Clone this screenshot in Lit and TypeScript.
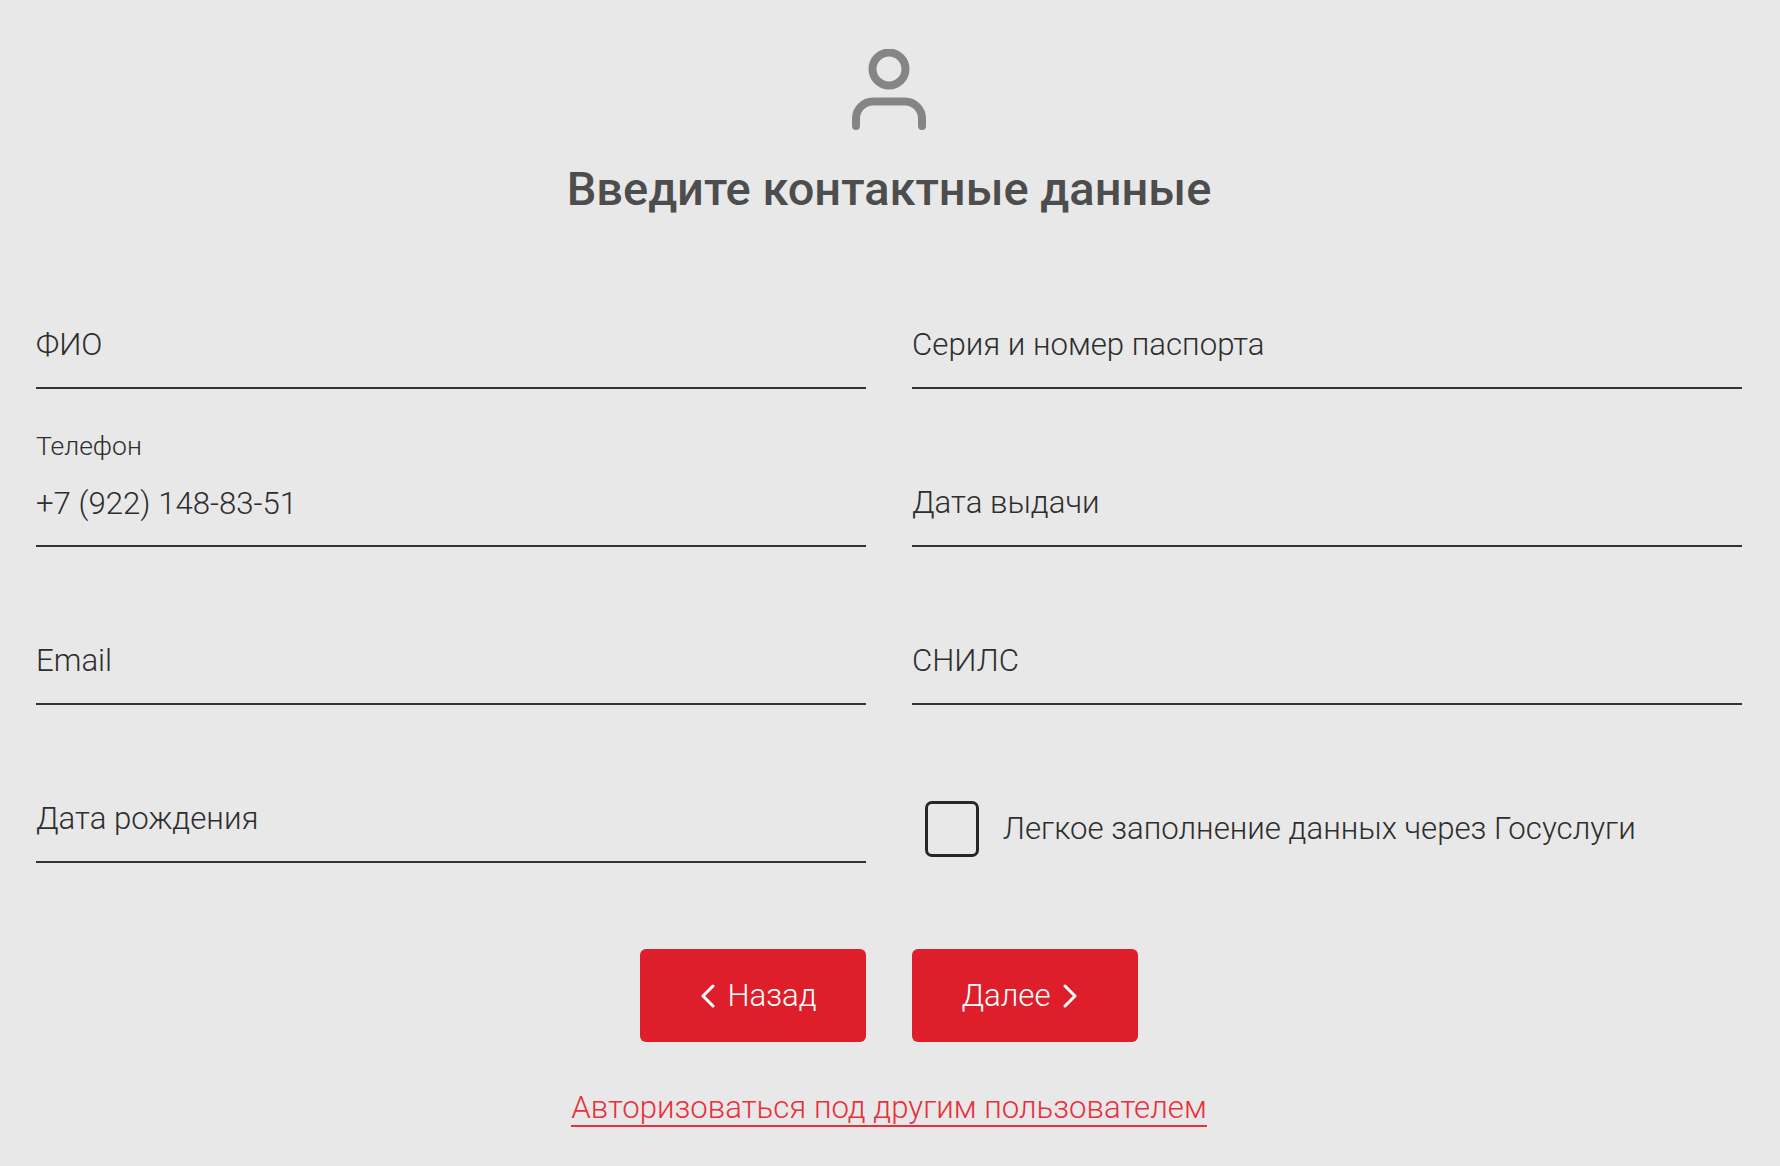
import { LitElement, html, css } from "lit";
import { customElement } from "lit/decorators.js";

@customElement("app-root")
export class AppRoot extends LitElement {
  static styles = css`
    :host { display: block; height: 1166px; background: #e8e8e8; font-family: Roboto, "Liberation Sans", sans-serif; color: #333; overflow: hidden; }
    .page { padding: 49px 38px 0 36px; display: flex; flex-direction: column; align-items: center; }
    .avatar { display: block; width: 74px; height: 82px; }
    .title { margin: 30px 0 0; font-size: 47px; line-height: 56px; font-weight: 500; color: #4d4d4d; text-align: center; }
    .form { align-self: stretch; margin-top: 80px; display: grid; grid-template-columns: 830px 830px; column-gap: 46px; }
    .field { height: 158px; box-sizing: border-box; padding-bottom: 26px; display: flex; flex-direction: column; justify-content: flex-end; position: relative; }
    .first { height: 92px; }
    .filled { padding-bottom: 25px; }
    .line { position: absolute; left: 0; right: 0; bottom: 0; height: 2px; background: #333; }
    .label { font-size: 31.2px; line-height: 36px; font-weight: 300; color: #2e2e2e; }
    .small { font-size: 26.5px; line-height: 32px; font-weight: 300; margin-bottom: 24px; color: #2e2e2e; }
    .check { display: flex; align-items: center; gap: 24px; padding-left: 13px; height: 158px; box-sizing: border-box; padding-top: 90px; }
    .box { width: 54px; height: 56px; box-sizing: border-box; border: 3px solid #262626; border-radius: 7px; flex: none; }
    .buttons { display: flex; gap: 46px; justify-content: center; margin-top: 86px; }
    .btn { width: 226px; height: 93px; border: 0; border-radius: 6px; background: #de1f2b; color: #fff; font: 300 31.2px Roboto, "Liberation Sans", sans-serif; display: flex; align-items: center; justify-content: center; gap: 12px; padding: 0; }
    .btn.back { padding-left: 12px; }
    .btn.next { padding-right: 12px; }
    .btn svg { width: 14px; height: 24px; display: block; }
    .link { margin-top: 48px; font-size: 31.2px; line-height: 35px; font-weight: 300; color: #e8303c; text-decoration: none; border-bottom: 2px solid #e8303c; }
  `;

  private field(label: string, first = false) {
    return html`<div class="field ${first ? "first" : ""}"><div class="label">${label}</div><div class="line"></div></div>`;
  }

  render() {
    return html`<div class="page">
      <svg class="avatar" viewBox="0 0 74 82" fill="none" stroke="#858585" stroke-width="8" stroke-linecap="round">
        <circle cx="37" cy="20" r="16.5"></circle>
        <path d="M4 77V69.5A17 17 0 0 1 21 52.5H53A17 17 0 0 1 70 69.5V77"></path>
      </svg>
      <h1 class="title">Введите контактные данные</h1>
      <div class="form">
        ${this.field("ФИО", true)}
        ${this.field("Серия и номер паспорта", true)}
        <div class="field filled"><div class="small">Телефон</div><div class="label">+7 (922) 148-83-51</div><div class="line"></div></div>
        ${this.field("Дата выдачи")}
        ${this.field("Email")}
        ${this.field("СНИЛС")}
        ${this.field("Дата рождения")}
        <div class="check"><div class="box"></div><div class="label">Легкое заполнение данных через Госуслуги</div></div>
      </div>
      <div class="buttons">
        <button class="btn back"><svg viewBox="0 0 14 24" fill="none" stroke="#fff" stroke-width="3" stroke-linecap="round" stroke-linejoin="round"><path d="M12 2L2 12L12 22"></path></svg>Назад</button>
        <button class="btn next">Далее<svg viewBox="0 0 14 24" fill="none" stroke="#fff" stroke-width="3" stroke-linecap="round" stroke-linejoin="round"><path d="M2 2L12 12L2 22"></path></svg></button>
      </div>
      <a class="link" href="#">Авторизоваться под другим пользователем</a>
    </div>`;
  }
}
